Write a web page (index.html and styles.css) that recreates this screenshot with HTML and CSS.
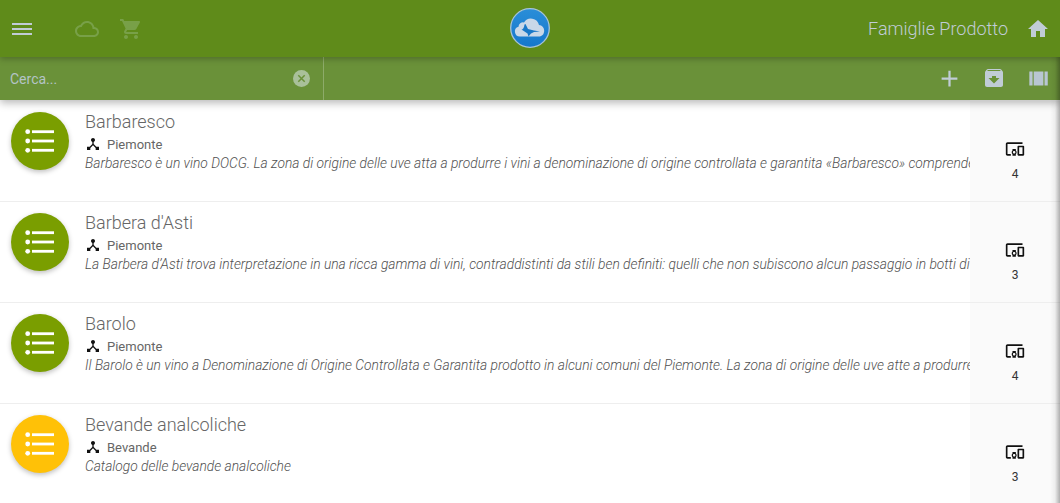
FILE: index.html
```html
<!DOCTYPE html>
<html lang="it">
<head>
<meta charset="utf-8">
<title>Famiglie Prodotto</title>
<link rel="stylesheet" href="styles.css">
</head>
<body>
<svg class="defs" width="0" height="0" aria-hidden="true">
  <defs>
    <symbol id="i-list" viewBox="0 0 58 58">
      <circle cx="16.700" cy="19.700" r="2.400" fill="#fff"/>
      <circle cx="16.700" cy="29" r="2.400" fill="#fff"/>
      <circle cx="16.700" cy="38.300" r="2.400" fill="#fff"/>
      <rect x="21" y="18.300" width="22" height="2.800" fill="#fff"/>
      <rect x="21" y="27.600" width="22" height="2.800" fill="#fff"/>
      <rect x="21" y="36.900" width="22" height="2.800" fill="#fff"/>
    </symbol>
    <symbol id="i-tree" viewBox="0 0 24 24">
      <path d="M17 16l-4-4V8.820C14.150 8.410 15 7.310 15 6c0-1.660-1.340-3-3-3S9 4.340 9 6c0 1.310.850 2.410 2 2.820V12l-4 4H3v5h5v-3.050l4-4.200 4 4.200V21h5v-5h-4z" fill="#111"/>
    </symbol>
    <symbol id="i-device" viewBox="0 0 24 24">
      <path d="M3 6h18V4H3c-1.100 0-2 .9-2 2v12c0 1.100.9 2 2 2h4v-2H3V6zm10 6H9v1.780c-.61.550-1 1.330-1 2.220s.39 1.670 1 2.220V20h4v-1.780c.61-.550 1-1.340 1-2.220s-.39-1.670-1-2.220V12zm-2 5.500c-.83 0-1.500-.67-1.500-1.500s.67-1.500 1.500-1.500 1.500.67 1.500 1.500-.67 1.500-1.500 1.500zM22 8h-6c-.5 0-1 .5-1 1v10c0 .5.5 1 1 1h6c.5 0 1-.5 1-1V9c0-.5-.5-1-1-1zm-1 10h-4v-8h4v8z" fill="#111"/>
    </symbol>
  </defs>
</svg>
<div class="page">
  <header class="topbar">
    <div class="top-left">
      <svg width="20" height="12" viewBox="0 0 20 12"><path d="M0 1h20M0 6h20M0 11h20" stroke="#c0ccd6" stroke-width="2"/></svg>
      <svg class="ic-cloud" width="24" height="24" viewBox="0 0 24 24"><path d="M19.350 10.040C18.670 6.590 15.640 4 12 4 9.110 4 6.600 5.640 5.350 8.040 2.340 8.360 0 10.910 0 14c0 3.310 2.690 6 6 6h13c2.760 0 5-2.240 5-5 0-2.640-2.050-4.780-4.650-4.960zM19 18H6c-2.210 0-4-1.790-4-4s1.790-4 4-4h.71C7.370 7.690 9.480 6 12 6c3.040 0 5.500 2.460 5.500 5.500v.5H19c1.660 0 3 1.340 3 3s-1.340 3-3 3z" fill="#78a048"/></svg>
      <svg class="ic-cart" width="24" height="24" viewBox="0 0 24 24"><path d="M7 18c-1.100 0-1.990.9-1.990 2S5.900 22 7 22s2-.9 2-2-.9-2-2-2zM1 2v2h2l3.600 7.590-1.350 2.450c-.16.280-.25.610-.25.960 0 1.100.9 2 2 2h12v-2H7.420c-.14 0-.25-.11-.25-.25l.03-.12.9-1.630h7.450c.75 0 1.410-.41 1.750-1.030l3.580-6.480c.08-.14.12-.31.12-.48 0-.55-.45-1-1-1H5.210l-.94-2H1zm16 16c-1.100 0-1.990.9-1.990 2s.89 2 1.990 2 2-.9 2-2-.9-2-2-2z" fill="#78a048"/></svg>
    </div>
    <div class="logo">
      <svg width="40" height="40" viewBox="0 0 40 40">
        <defs><linearGradient id="lg" x1="0" y1="0" x2="0" y2="1"><stop offset="0" stop-color="#2a8ed8"/><stop offset="1" stop-color="#1577cc"/></linearGradient></defs>
        <circle cx="20" cy="20" r="19.300" fill="url(#lg)" stroke="#a7c3d8" stroke-width="1.300"/>
        <path d="M10 28.500a5 5 0 0 1-1.500-9.800 4.500 4.500 0 0 1 5.500-4.200 8.200 8.200 0 0 1 15 2.500 5.900 5.900 0 0 1 1 11.500z" fill="#c9d8e8"/>
        <path d="M11.500 21.500c1.500 0 2.500-1.500 3-5l1-.5 2.500 5 6 1.500 6 1-6 .5-3 1.500-2.500 3-1-3-3-2z" fill="#1878c8"/>
      </svg>
    </div>
    <div class="top-right">
      <span class="page-title">Famiglie Prodotto</span>
      <svg class="ic-home" width="24" height="24" viewBox="0 0 24 24"><path d="M10 20v-6h4v6h5v-8h3L12 3 2 12h3v8z" fill="#c0ccd6"/></svg>
    </div>
  </header>
  <div class="subbar">
    <div class="search">
      <span class="search-text">Cerca...</span>
      <svg width="17" height="17" viewBox="0 0 17 17"><circle cx="8.500" cy="8.500" r="8.500" fill="#a9c09a"/><path d="M5.300 5.300l6.400 6.400M11.700 5.300l-6.400 6.400" stroke="#6a9139" stroke-width="1.500"/></svg>
    </div>
    <div class="actions">
      <svg width="27" height="27" viewBox="0 0 24 24"><path d="M19 13h-6v6h-2v-6H5v-2h6V5h2v6h6v2z" fill="#c0ccd6"/></svg>
      <svg class="ic-archive" width="24" height="24" viewBox="0 0 24 24"><path d="M20.540 5.230l-1.390-1.680C18.880 3.210 18.470 3 18 3H6c-.47 0-.88.21-1.160.55L3.460 5.230C3.170 5.570 3 6.020 3 6.500V19c0 1.100.9 2 2 2h14c1.100 0 2-.9 2-2V6.500c0-.48-.17-.93-.46-1.270zM12 17.500L6.500 12H10v-2h4v2h3.500L12 17.500zM5.120 5l.81-1h12l.94 1H5.120z" fill="#c0ccd6"/></svg>
      <svg class="ic-cols" width="26" height="26" viewBox="0 0 24 24"><path d="M4 18h3V5H4v13zM18 5v13h3V5h-3zM8 18h9V5H8v13z" fill="#b8c6d2"/></svg>
    </div>
  </div>
  <main class="list">
    <article class="row">
      <div class="row-main">
        <div class="avatar green"><svg width="58" height="58"><use href="#i-list"/></svg></div>
        <div class="info">
          <h2>Barbaresco</h2>
          <div class="cat"><svg width="16" height="16"><use href="#i-tree"/></svg><span>Piemonte</span></div>
          <p>Barbaresco è un vino DOCG. La zona di origine delle uve atta a produrre i vini a denominazione di origine controllata e garantita «Barbaresco» comprende l'intero territorio</p>
        </div>
      </div>
      <div class="count"><svg width="20" height="20"><use href="#i-device"/></svg><span>4</span></div>
    </article>
    <article class="row">
      <div class="row-main">
        <div class="avatar green"><svg width="58" height="58"><use href="#i-list"/></svg></div>
        <div class="info">
          <h2>Barbera d'Asti</h2>
          <div class="cat"><svg width="16" height="16"><use href="#i-tree"/></svg><span>Piemonte</span></div>
          <p>La Barbera d’Asti trova interpretazione in una ricca gamma di vini, contraddistinti da stili ben definiti: quelli che non subiscono alcun passaggio in botti di legno</p>
        </div>
      </div>
      <div class="count"><svg width="20" height="20"><use href="#i-device"/></svg><span>3</span></div>
    </article>
    <article class="row">
      <div class="row-main">
        <div class="avatar green"><svg width="58" height="58"><use href="#i-list"/></svg></div>
        <div class="info">
          <h2>Barolo</h2>
          <div class="cat"><svg width="16" height="16"><use href="#i-tree"/></svg><span>Piemonte</span></div>
          <p>Il Barolo è un vino a Denominazione di Origine Controllata e Garantita prodotto in alcuni comuni del Piemonte. La zona di origine delle uve atte a produrre i vini</p>
        </div>
      </div>
      <div class="count"><svg width="20" height="20"><use href="#i-device"/></svg><span>4</span></div>
    </article>
    <article class="row">
      <div class="row-main">
        <div class="avatar amber"><svg width="58" height="58"><use href="#i-list"/></svg></div>
        <div class="info">
          <h2>Bevande analcoliche</h2>
          <div class="cat"><svg width="16" height="16"><use href="#i-tree"/></svg><span>Bevande</span></div>
          <p>Catalogo delle bevande analcoliche</p>
        </div>
      </div>
      <div class="count"><svg width="20" height="20"><use href="#i-device"/></svg><span>3</span></div>
    </article>
  </main>
  <div class="edge-shadow"></div>
</div>
</body>
</html>
```

FILE: styles.css
```css
* { box-sizing: border-box; }
html, body { margin: 0; padding: 0; height: 100%; overflow: hidden; background: #fff; }
body { font-family: Roboto, "Liberation Sans", sans-serif; }
.defs { position: absolute; }
.page { position: relative; width: 1060px; height: 503px; overflow: hidden; }

.topbar {
  position: relative;
  z-index: 3;
  height: 57px;
  background: #5f8b1a;
  display: flex;
  align-items: center;
  justify-content: space-between;
  box-shadow: 0 2px 6px rgba(0,0,0,.25);
}
.top-left { display: flex; align-items: center; padding-left: 12px; width: 300px; }
.ic-cloud { margin-left: 43px; }
.ic-cart { margin-left: 20px; }
.logo { position: absolute; left: 510px; top: 8px; width: 40px; height: 40px; }
.top-right { display: flex; align-items: center; padding-right: 10px; }
.page-title { font-size: 18px; font-weight: 300; color: #c0ccd6; line-height: 57px; }
.ic-home { margin-left: 18px; }

.subbar {
  position: relative;
  z-index: 2;
  height: 43px;
  background: #6a9139;
  display: flex;
  justify-content: space-between;
  box-shadow: 0 3px 8px rgba(0,0,0,.28);
}
.search {
  width: 324px;
  border-right: 1px solid #8dab69;
  padding: 0 13px 0 10px;
  display: flex;
  align-items: center;
  justify-content: space-between;
}
.search-text { font-size: 14px; color: #b4c4c6; }
.actions { display: flex; align-items: center; padding-right: 9px; }
.ic-archive { margin-left: 19px; margin-top: -1px; }
.ic-cols { margin-left: 19px; }

.list { display: flex; flex-direction: column; padding-top: 1px; }
.row { height: 101px; display: flex; border-bottom: 1px solid #eeeeee; }
.row:last-child { border-bottom: 0; }
.row-main { flex: 1; min-width: 0; display: flex; overflow: hidden; padding: 11px 0 0 11px; }
.avatar {
  flex: none;
  width: 58px;
  height: 58px;
  border-radius: 50%;
  box-shadow: 0 2px 5px rgba(0,0,0,.25);
}
.avatar svg { display: block; }
.green { background: #7a9e00; }
.amber { background: #ffc107; }
.info { margin-left: 16px; min-width: 0; flex: 1; }
.info h2 { margin: 0; font-size: 18px; font-weight: 300; line-height: 20px; color: #666; white-space: nowrap; }
.cat { display: flex; align-items: center; height: 16px; margin-top: 4px; font-size: 13px; color: #666; }
.cat svg { margin-right: 6px; }
.info p { margin: 2px 0 0; font-size: 13.800px; font-weight: 300; font-style: italic; line-height: 18px; color: #505050; white-space: nowrap; }

.count {
  flex: none;
  width: 90px;
  background: #fafafa;
  display: flex;
  flex-direction: column;
  align-items: center;
  padding-top: 38px;
  font-size: 12px;
  color: #333;
}
.count svg { display: block; }
.count span { margin-top: 8px; }
.edge-shadow {
  position: absolute;
  top: 57px;
  right: 0;
  bottom: 0;
  width: 10px;
  background: linear-gradient(to right, rgba(0,0,0,0), rgba(0,0,0,.05) 50%, rgba(0,0,0,.3));
  pointer-events: none;
  z-index: 4;
}
```
